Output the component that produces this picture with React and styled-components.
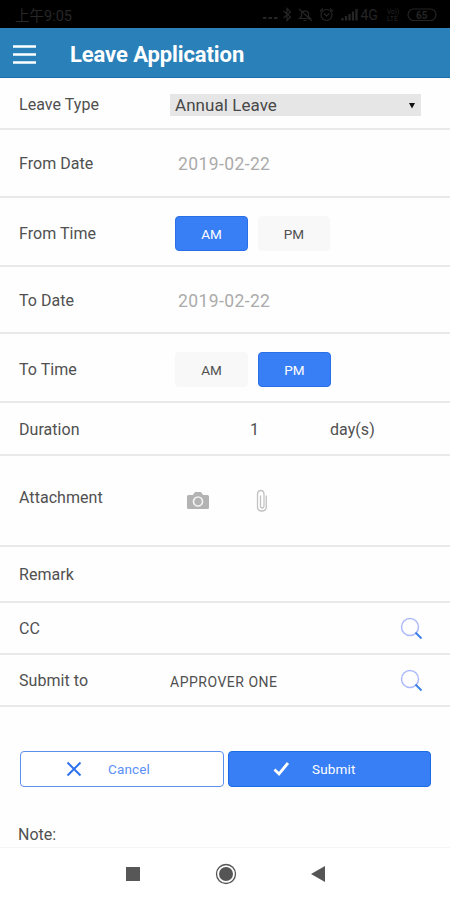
import React from "react";
import styled, { createGlobalStyle } from "styled-components";

const GlobalStyle = createGlobalStyle`
  *, *::before, *::after { box-sizing: border-box; }
  body { margin: 0; background: #fff; }
  button { font-family: inherit; padding: 0; margin: 0; }
  svg { display: block; flex: none; }
`;

const Screen = styled.div`
  width: 450px;
  height: 900px;
  display: flex;
  flex-direction: column;
  overflow: hidden;
  background: #fefefe;
  color: #505050;
  font-family: Roboto, "Noto Sans CJK SC", sans-serif;
`;

const StatusBar = styled.div`
  height: 28px;
  flex: none;
  display: flex;
  align-items: center;
  justify-content: space-between;
  padding: 0 13px 0 15px;
  background: #000;
  color: #272727;
  font-size: 14.5px;
`;

const Header = styled.header`
  height: 50px;
  flex: none;
  display: flex;
  align-items: center;
  gap: 33px;
  padding: 4px 13px 0;
  background: #2a80b9;
  border-bottom: 1px solid #1b6ea8;
`;

const MenuButton = styled.button`
  border: 0;
  background: none;
  color: #fff;
`;

const Title = styled.h1`
  margin: 0;
  color: #fff;
  font-size: 22px;
  font-weight: 700;
  line-height: 26px;
  letter-spacing: -0.1px;
`;

const Row = styled.div`
  height: ${(p) => p.$height}px;
  flex: none;
  display: grid;
  grid-template-columns: 151px 1fr;
  align-items: center;
  padding: ${(p) => p.$top || 0}px 27px ${(p) => p.$bottom || 0}px 19px;
  border-bottom: 2px solid #e9e9e9;
`;

const Label = styled.span`
  font-size: 16px;
  line-height: 20px;
  letter-spacing: 0.05px;
`;

const Select = styled.div`
  width: 251px;
  height: 22px;
  display: flex;
  align-items: center;
  justify-content: space-between;
  padding: 0 5px;
  background: #e6e6e6;
  color: #484848;
  font-size: 17px;
  letter-spacing: 0.05px;
`;

const DateValue = styled.span`
  padding-left: 8px;
  color: #ababab;
  font-size: 17.5px;
  line-height: 20px;
  letter-spacing: 0.4px;
`;

const Toggle = styled.div`
  display: flex;
  gap: 10px;
  padding-left: 5px;
`;

const ToggleButton = styled.button`
  width: ${(p) => (p.$active ? 73 : 72)}px;
  height: 35px;
  border: 1px solid ${(p) => (p.$active ? "#2b6fe8" : "#f8f8f8")};
  border-radius: 4px;
  background: ${(p) => (p.$active ? "#387ef5" : "#f8f8f8")};
  color: ${(p) => (p.$active ? "#fff" : "#505050")};
  font-size: 13.5px;

  &:first-child:not(:last-child) {
    width: 73px;
  }
`;

const Duration = styled.div`
  display: grid;
  grid-template-columns: 80px 1fr;
  padding-left: 80px;
  font-size: 16px;
  line-height: 20px;
  letter-spacing: 0.05px;
`;

const Attachments = styled.div`
  display: flex;
  align-items: center;
  gap: 46px;
  padding: 5px 0 0 16px;
`;

const Approver = styled.div`
  display: flex;
  align-items: center;
  justify-content: space-between;
  font-size: 14px;
  line-height: 20px;
  letter-spacing: 0.5px;
  margin-right: -1px;
`;

const ApproverName = styled.span`
  padding-top: 1px;
`;

const Actions = styled.div`
  flex: none;
  display: flex;
  gap: 4px;
  padding: 44px 19px 0 20px;
`;

const ActionButton = styled.button`
  width: ${(p) => (p.$primary ? 203 : 204)}px;
  height: 36px;
  display: flex;
  align-items: center;
  gap: ${(p) => (p.$primary ? 22 : 26)}px;
  padding-left: ${(p) => (p.$primary ? 44 : 45)}px;
  border: 1px solid ${(p) => (p.$primary ? "#1c6be6" : "#5b8ff0")};
  border-radius: 4px;
  background: ${(p) => (p.$primary ? "#387ef5" : "#fff")};
  color: ${(p) => (p.$primary ? "#fff" : "#5b90f6")};
  font-size: 13.5px;
  letter-spacing: 0.15px;
`;

const Note = styled.div`
  flex: 1;
  padding: 38px 18px 0;
  font-size: 16px;
  line-height: 20px;
`;

const NavBar = styled.nav`
  height: 53px;
  flex: none;
  display: grid;
  grid-template-columns: 93px 93px 91px;
  align-items: center;
  justify-items: center;
  padding-left: 86px;
  border-top: 1px solid #f5f5f5;
  background: #fff;
`;

const MenuIcon = () => (
  <svg width="24" height="20" viewBox="0 0 24 20" stroke="#fff" strokeWidth="2.3">
    <path d="M0 1.500h23M0 9.500h23M0 17.500h23" />
  </svg>
);

const StatusIcons = () => (
  <svg width="174" height="18" viewBox="0 0 174 18" fill="none" stroke="#252525" strokeWidth="1.200">
    <path d="M0 13h3.500M5.500 13H9M11 13h3.500" strokeWidth="2" />
    <path d="M20.500 6l7 6-3.500 3.500V3.500L27.500 7l-7 6" />
    <path d="M36.500 13.500h11l-2-2V8a4 4 0 0 0-7 0v3.500zM40.500 15.500h3M36 4l13 12" />
    <circle cx="63.500" cy="10" r="5.500" />
    <path d="M61 8.500l2.500 2.500 3-2.500M57 6.500l3-3M67 3.500l3 3" />
    <path d="M79.500 15.500v-2.500M83 15.500v-4.500M86.500 15.500V9M90 15.500V6.500M93.500 15.500V4" strokeWidth="2.300" />
    <rect x="145" y="4" width="28" height="11.500" rx="5.700" />
    <g fill="#252525" stroke="none" fontFamily="Roboto">
      <text x="97.500" y="15" fontSize="14">4G</text>
      <text x="124" y="8.500" fontSize="6.500">Vo))</text>
      <text x="124" y="16" fontSize="7">LTE</text>
      <text x="153" y="13.500" fontSize="10" fontWeight="700">65</text>
    </g>
  </svg>
);

const CameraIcon = () => (
  <svg width="24" height="20" viewBox="0 0 24 20">
    <path d="M2.500 4H7l1.500-2.500Q9 1 10 1h4q1 0 1.500.5L17 4h4.500Q23 4 23 5.500v11q0 1.500-1.500 1.500h-19Q1 18 1 16.500v-11Q1 4 2.500 4z" fill="#b3b3b3" />
    <circle cx="12" cy="10.500" r="4.500" fill="none" stroke="#f2f2f2" strokeWidth="1.700" />
  </svg>
);

const ClipIcon = () => (
  <svg width="12" height="24" viewBox="0 0 12 24" fill="none" stroke="#c2c2c2" strokeWidth="1.300">
    <path d="M4.500 6.500V17q0 2 1.700 2T8 17V5.500Q8 1.500 4.800 1.500T1.500 5.500V18q0 4 4.300 4t4.500-4V6.500" />
  </svg>
);

const SearchIcon = () => (
  <svg width="24" height="24" viewBox="0 0 24 24" fill="none">
    <circle cx="10" cy="10" r="8.500" stroke="#aebbfa" strokeWidth="1.500" />
    <path d="M15.500 15.500l6 6" stroke="#3a80e8" strokeWidth="1.900" />
  </svg>
);

const CloseIcon = () => (
  <svg width="16" height="16" viewBox="0 0 16 16" stroke="#2f72ee" strokeWidth="2">
    <path d="M1.500 1.500l13 13M14.500 1.500l-13 13" />
  </svg>
);

const CheckIcon = () => (
  <svg width="17" height="16" viewBox="0 0 17 16" fill="none" stroke="#fff" strokeWidth="2.800">
    <path d="M1.500 8.500l4.500 4.500L15 2" />
  </svg>
);

const CaretIcon = () => (
  <svg width="8" height="7" viewBox="0 0 8 7">
    <path d="M1 1h6L4 6.500z" fill="#111" />
  </svg>
);

const PeriodToggle = ({ value }) => (
  <Toggle>
    {["AM", "PM"].map((period) => (
      <ToggleButton key={period} $active={period === value}>
        {period}
      </ToggleButton>
    ))}
  </Toggle>
);

export default function App() {
  return (
    <Screen>
      <GlobalStyle />
      <StatusBar>
        <span>上午9:05</span>
        <StatusIcons />
      </StatusBar>
      <Header>
        <MenuButton aria-label="Menu">
          <MenuIcon />
        </MenuButton>
        <Title>Leave Application</Title>
      </Header>
      <Row $height={52} $top={4}>
        <Label>Leave Type</Label>
        <Select>
          Annual Leave
          <CaretIcon />
        </Select>
      </Row>
      <Row $height={68} $top={2}>
        <Label>From Date</Label>
        <DateValue>2019-02-22</DateValue>
      </Row>
      <Row $height={69} $top={4}>
        <Label>From Time</Label>
        <PeriodToggle value="AM" />
      </Row>
      <Row $height={67} $top={2}>
        <Label>To Date</Label>
        <DateValue>2019-02-22</DateValue>
      </Row>
      <Row $height={69} $top={4}>
        <Label>To Time</Label>
        <PeriodToggle value="PM" />
      </Row>
      <Row $height={53} $top={2}>
        <Label>Duration</Label>
        <Duration>
          <span>1</span>
          <span>day(s)</span>
        </Duration>
      </Row>
      <Row $height={91} $bottom={5}>
        <Label>Attachment</Label>
        <Attachments>
          <CameraIcon />
          <ClipIcon />
        </Attachments>
      </Row>
      <Row $height={56} $top={2}>
        <Label>Remark</Label>
      </Row>
      <Row $height={52} $top={2}>
        <Label>CC</Label>
        <Approver>
          <span />
          <SearchIcon />
        </Approver>
      </Row>
      <Row $height={52} $top={2}>
        <Label>Submit to</Label>
        <Approver>
          <ApproverName>APPROVER ONE</ApproverName>
          <SearchIcon />
        </Approver>
      </Row>
      <Actions>
        <ActionButton>
          <CloseIcon />
          Cancel
        </ActionButton>
        <ActionButton $primary>
          <CheckIcon />
          Submit
        </ActionButton>
      </Actions>
      <Note>Note:</Note>
      <NavBar>
        <svg width="14" height="14">
          <rect width="14" height="14" fill="#575757" />
        </svg>
        <svg width="22" height="22">
          <circle cx="11" cy="11" r="9.500" fill="none" stroke="#555" strokeWidth="1.300" />
          <circle cx="11" cy="11" r="7" fill="#555" />
        </svg>
        <svg width="14" height="16">
          <path d="M14 0v16L0 8z" fill="#555" />
        </svg>
      </NavBar>
    </Screen>
  );
}
